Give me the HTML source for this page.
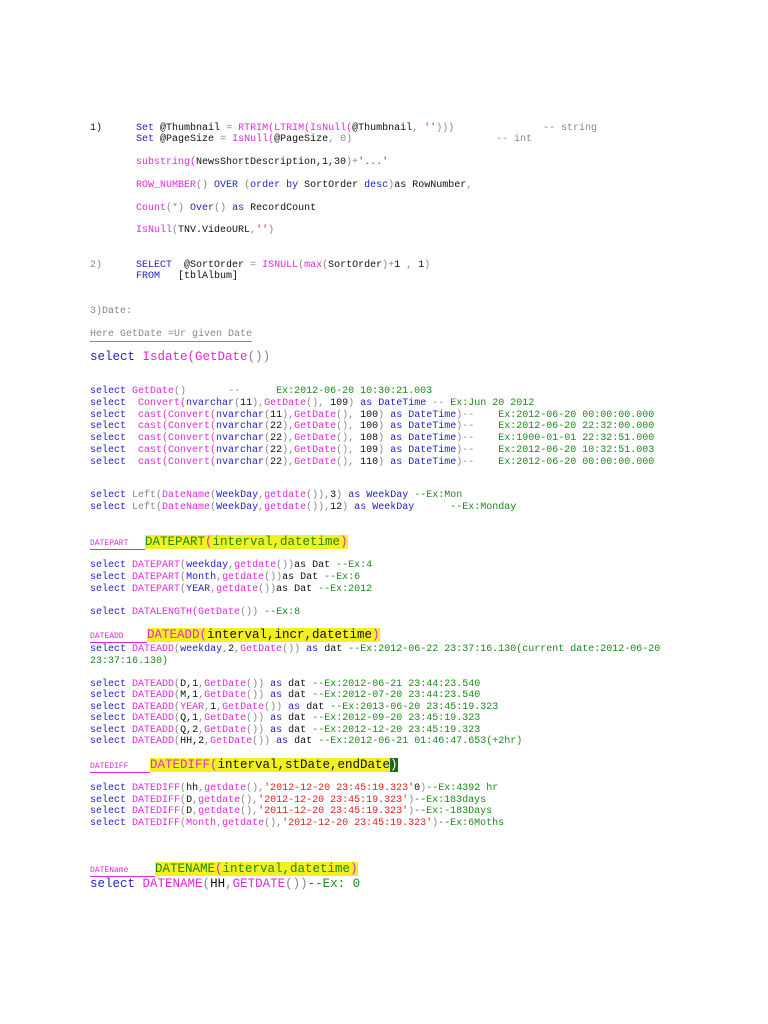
<!DOCTYPE html>
<html><head><meta charset="utf-8"><style>
html,body{margin:0;padding:0;background:#fff;width:768px;height:1024px;overflow:hidden}
body{position:relative;font-family:"Liberation Mono",monospace;font-size:10px;color:#222}
.l{position:absolute;white-space:pre;line-height:12px}
.b{color:#2323c8}.m{color:#e028d8}.g{color:#1c8a1c}.r{color:#e81c1c}.k{color:#111}.y{color:#888}
.big{font-size:12.5px;line-height:15px}
.hl{background:#f4f020}
.u{border-bottom:1.5px solid #e028d8;display:inline-block;line-height:11px}
.sm{font-size:8px}
</style></head><body>
<div class="l k" style="left:90px;top:123px">1)</div>
<div class="l" style="left:136px;top:123px"><span class="b">Set</span> <span class="k">@Thumbnail</span> <span class="y">=</span> <span class="m">RTRIM(LTRIM(IsNull(</span><span class="k">@Thumbnail</span><span class="y">,</span> <span class="r">''</span><span class="y">)))</span></div>
<div class="l y" style="left:543px;top:123px">-- string</div>
<div class="l" style="left:136px;top:134px"><span class="b">Set</span> <span class="k">@PageSize</span> <span class="y">=</span> <span class="m">IsNull(</span><span class="k">@PageSize</span><span class="y">, 0)</span></div>
<div class="l y" style="left:496px;top:134px">-- int</div>
<div class="l" style="left:136px;top:157px"><span class="m">substring(</span><span class="k">NewsShortDescription,1,30</span><span class="y">)+</span><span class="r">'...'</span></div>
<div class="l" style="left:136px;top:180px"><span class="m">ROW_NUMBER</span><span class="y">()</span> <span class="b">OVER</span> <span class="y">(</span><span class="b">order by</span> <span class="k">SortOrder</span> <span class="b">desc</span><span class="y">)</span><span class="k">as RowNumber</span><span class="y">,</span></div>
<div class="l" style="left:136px;top:203px"><span class="m">Count</span><span class="y">(*)</span> <span class="b">Over</span><span class="y">()</span> <span class="b">as</span> <span class="k">RecordCount</span></div>
<div class="l" style="left:136px;top:225px"><span class="m">IsNull</span><span class="y">(</span><span class="k">TNV.VideoURL</span><span class="y">,</span><span class="r">''</span><span class="y">)</span></div>
<div class="l y" style="left:90px;top:260px">2)</div>
<div class="l" style="left:136px;top:260px"><span class="b">SELECT</span>  <span class="k">@SortOrder</span> <span class="y">=</span> <span class="m">ISNULL</span><span class="y">(</span><span class="m">max</span><span class="y">(</span><span class="k">SortOrder</span><span class="y">)+</span><span class="k">1</span> <span class="y">,</span> <span class="k">1</span><span class="y">)</span></div>
<div class="l" style="left:136px;top:271px"><span class="b">FROM</span>   <span class="k">[tblAlbum]</span></div>
<div class="l y" style="left:90px;top:306px">3)Date:</div>
<div class="l y" style="left:90px;top:329px;border-bottom:1px solid #888">Here GetDate =Ur given Date</div>
<div class="l big" style="left:90px;top:350px"><span class="b">select</span> <span class="m">Isdate(GetDate</span><span class="y">())</span></div>

<div class="l" style="left:90px;top:386px"><span class="b">select</span> <span class="m">GetDate</span><span class="y">()</span>       <span class="y">--</span>      <span class="g">Ex:2012-06-20 10:30:21.003</span></div>
<div class="l" style="left:90px;top:398px"><span class="b">select</span>  <span class="m">Convert(</span><span class="b">nvarchar</span><span class="y">(</span><span class="k">11</span><span class="y">),</span><span class="m">GetDate</span><span class="y">(),</span> <span class="k">109</span><span class="y">)</span> <span class="b">as DateTime</span> <span class="y">--</span> <span class="g">Ex:Jun 20 2012</span></div>
<div class="l" style="left:90px;top:410px"><span class="b">select</span>  <span class="m">cast(Convert(</span><span class="b">nvarchar</span><span class="y">(</span><span class="k">11</span><span class="y">),</span><span class="m">GetDate</span><span class="y">(),</span> <span class="k">100</span><span class="y">)</span> <span class="b">as DateTime</span><span class="y">)--</span>    <span class="g">Ex:2012-06-20 00:00:00.000</span></div>
<div class="l" style="left:90px;top:421px"><span class="b">select</span>  <span class="m">cast(Convert(</span><span class="b">nvarchar</span><span class="y">(</span><span class="k">22</span><span class="y">),</span><span class="m">GetDate</span><span class="y">(),</span> <span class="k">100</span><span class="y">)</span> <span class="b">as DateTime</span><span class="y">)--</span>    <span class="g">Ex:2012-06-20 22:32:00.000</span></div>
<div class="l" style="left:90px;top:433px"><span class="b">select</span>  <span class="m">cast(Convert(</span><span class="b">nvarchar</span><span class="y">(</span><span class="k">22</span><span class="y">),</span><span class="m">GetDate</span><span class="y">(),</span> <span class="k">108</span><span class="y">)</span> <span class="b">as DateTime</span><span class="y">)--</span>    <span class="g">Ex:1900-01-01 22:32:51.000</span></div>
<div class="l" style="left:90px;top:445px"><span class="b">select</span>  <span class="m">cast(Convert(</span><span class="b">nvarchar</span><span class="y">(</span><span class="k">22</span><span class="y">),</span><span class="m">GetDate</span><span class="y">(),</span> <span class="k">109</span><span class="y">)</span> <span class="b">as DateTime</span><span class="y">)--</span>    <span class="g">Ex:2012-06-20 10:32:51.003</span></div>
<div class="l" style="left:90px;top:457px"><span class="b">select</span>  <span class="m">cast(Convert(</span><span class="b">nvarchar</span><span class="y">(</span><span class="k">22</span><span class="y">),</span><span class="m">GetDate</span><span class="y">(),</span> <span class="k">110</span><span class="y">)</span> <span class="b">as DateTime</span><span class="y">)--</span>    <span class="g">Ex:2012-06-20 00:00:00.000</span></div>

<div class="l" style="left:90px;top:490px"><span class="b">select</span> <span class="y">Left(</span><span class="m">DateName</span><span class="y">(</span><span class="b">WeekDay</span><span class="y">,</span><span class="m">getdate</span><span class="y">()),</span><span class="k">3</span><span class="y">)</span> <span class="b">as WeekDay</span> <span class="g">--Ex:Mon</span></div>
<div class="l" style="left:90px;top:502px"><span class="b">select</span> <span class="y">Left(</span><span class="m">DateName</span><span class="y">(</span><span class="b">WeekDay</span><span class="y">,</span><span class="m">getdate</span><span class="y">()),</span><span class="k">12</span><span class="y">)</span> <span class="b">as WeekDay</span>      <span class="g">--Ex:Monday</span></div>

<div class="l" style="left:90px;top:535px"><span class="m sm u" style="width:55px">DATEPART</span><span class="big hl g">DATEPART<span class="m">(</span>interval,datetime<span class="m">)</span></span></div>
<div class="l" style="left:90px;top:560px"><span class="b">select</span> <span class="m">DATEPART</span><span class="y">(</span><span class="b">weekday</span><span class="y">,</span><span class="m">getdate</span><span class="y">())</span><span class="k">as Dat</span> <span class="g">--Ex:4</span></div>
<div class="l" style="left:90px;top:572px"><span class="b">select</span> <span class="m">DATEPART</span><span class="y">(</span><span class="b">Month</span><span class="y">,</span><span class="m">getdate</span><span class="y">())</span><span class="k">as Dat</span> <span class="g">--Ex:6</span></div>
<div class="l" style="left:90px;top:584px"><span class="b">select</span> <span class="m">DATEPART</span><span class="y">(</span><span class="b">YEAR</span><span class="y">,</span><span class="m">getdate</span><span class="y">())</span><span class="k">as Dat</span> <span class="g">--Ex:2012</span></div>
<div class="l" style="left:90px;top:607px"><span class="b">select</span> <span class="m">DATALENGTH(GetDate</span><span class="y">())</span> <span class="g">--Ex:8</span></div>

<div class="l" style="left:90px;top:628px"><span class="m sm u" style="width:57px">DATEADD</span><span class="big hl k"><span class="m">DATEADD(</span>interval,incr,datetime<span class="m">)</span></span></div>
<div class="l" style="left:90px;top:644px"><span class="b">select</span> <span class="m">DATEADD</span><span class="y">(</span><span class="b">weekday</span><span class="y">,</span><span class="k">2</span><span class="y">,</span><span class="m">GetDate</span><span class="y">())</span> <span class="b">as</span> <span class="k">dat</span> <span class="g">--Ex:2012-06-22 23:37:16.130(current date:2012-06-20</span></div>
<div class="l g" style="left:90px;top:656px">23:37:16.130)</div>
<div class="l" style="left:90px;top:679px"><span class="b">select</span> <span class="m">DATEADD</span><span class="y">(</span><span class="k">D,1</span><span class="y">,</span><span class="m">GetDate</span><span class="y">())</span> <span class="b">as</span> <span class="k">dat</span> <span class="g">--Ex:2012-06-21 23:44:23.540</span></div>
<div class="l" style="left:90px;top:690px"><span class="b">select</span> <span class="m">DATEADD</span><span class="y">(</span><span class="k">M,1</span><span class="y">,</span><span class="m">GetDate</span><span class="y">())</span> <span class="b">as</span> <span class="k">dat</span> <span class="g">--Ex:2012-07-20 23:44:23.540</span></div>
<div class="l" style="left:90px;top:702px"><span class="b">select</span> <span class="m">DATEADD</span><span class="y">(</span><span class="m">YEAR</span><span class="y">,</span><span class="k">1</span><span class="y">,</span><span class="m">GetDate</span><span class="y">())</span> <span class="b">as</span> <span class="k">dat</span> <span class="g">--Ex:2013-06-20 23:45:19.323</span></div>
<div class="l" style="left:90px;top:713px"><span class="b">select</span> <span class="m">DATEADD</span><span class="y">(</span><span class="k">Q,1</span><span class="y">,</span><span class="m">GetDate</span><span class="y">())</span> <span class="b">as</span> <span class="k">dat</span> <span class="g">--Ex:2012-09-20 23:45:19.323</span></div>
<div class="l" style="left:90px;top:725px"><span class="b">select</span> <span class="m">DATEADD</span><span class="y">(</span><span class="k">Q,2</span><span class="y">,</span><span class="m">GetDate</span><span class="y">())</span> <span class="b">as</span> <span class="k">dat</span> <span class="g">--Ex:2012-12-20 23:45:19.323</span></div>
<div class="l" style="left:90px;top:736px"><span class="b">select</span> <span class="m">DATEADD</span><span class="y">(</span><span class="k">HH,2</span><span class="y">,</span><span class="m">GetDate</span><span class="y">())</span> <span class="b">as</span> <span class="k">dat</span> <span class="g">--Ex:2012-06-21 01:46:47.653(+2hr)</span></div>

<div class="l" style="left:90px;top:758px"><span class="m sm u" style="width:60px">DATEDIFF</span><span class="big hl k"><span class="m">DATEDIFF(</span>interval,stDate,endDate</span><span class="big" style="background:#1a6a1a;color:#fff">)</span></div>
<div class="l" style="left:90px;top:783px"><span class="b">select</span> <span class="m">DATEDIFF</span><span class="y">(</span><span class="k">hh</span><span class="y">,</span><span class="m">getdate</span><span class="y">(),</span><span class="r">'2012-12-20 23:45:19.323'</span><span class="k">0</span><span class="y">)</span><span class="g">--Ex:4392 hr</span></div>
<div class="l" style="left:90px;top:795px"><span class="b">select</span> <span class="m">DATEDIFF</span><span class="y">(</span><span class="k">D</span><span class="y">,</span><span class="m">getdate</span><span class="y">(),</span><span class="r">'2012-12-20 23:45:19.323'</span><span class="y">)</span><span class="g">--Ex:183days</span></div>
<div class="l" style="left:90px;top:806px"><span class="b">select</span> <span class="m">DATEDIFF</span><span class="y">(</span><span class="k">D</span><span class="y">,</span><span class="m">getdate</span><span class="y">(),</span><span class="r">'2011-12-20 23:45:19.323'</span><span class="y">)</span><span class="g">--Ex:-183Days</span></div>
<div class="l" style="left:90px;top:818px"><span class="b">select</span> <span class="m">DATEDIFF</span><span class="y">(</span><span class="m">Month</span><span class="y">,</span><span class="m">getdate</span><span class="y">(),</span><span class="r">'2012-12-20 23:45:19.323'</span><span class="y">)</span><span class="g">--Ex:6Moths</span></div>

<div class="l" style="left:90px;top:862px"><span class="m sm u" style="width:65px">DATEName</span><span class="big hl g">DATENAME<span class="m">(</span>interval,datetime<span class="m">)</span></span></div>
<div class="l big" style="left:90px;top:877px"><span class="b">select</span> <span class="m">DATENAME</span><span class="y">(</span><span class="k">HH</span><span class="y">,</span><span class="m">GETDATE</span><span class="y">())</span><span class="g">--Ex: 0</span></div>
</body></html>
